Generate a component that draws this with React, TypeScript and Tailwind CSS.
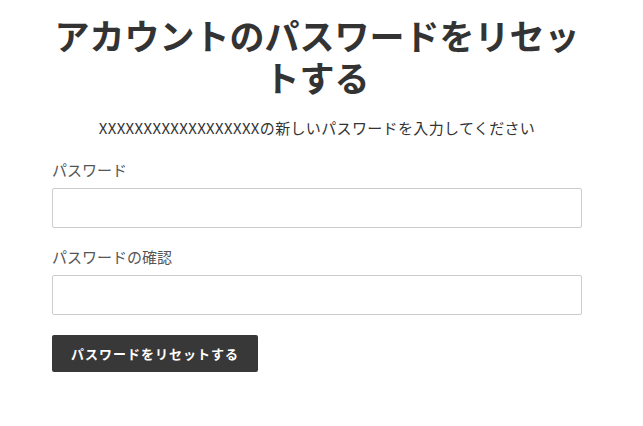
export default function App() {
  return (
    <div className="min-h-screen bg-white font-['Noto_Sans_CJK_JP',sans-serif] text-[#333]">
      <div className="ml-[52px] w-[530px] pt-[14px]">
        <h1 className="text-center text-[35px] font-bold leading-[42px] text-[#333]">
          アカウントのパスワードをリセットする
        </h1>
        <p className="mt-[19px] text-center text-[15px] leading-[22px] tracking-[0.35px] text-[#333]">
          XXXXXXXXXXXXXXXXXXの新しいパスワードを入力してください
        </p>
        <form className="mt-[20px]" onSubmit={e => e.preventDefault()}>
          <label className="block text-[15px] leading-[22px] text-[#555]">パスワード</label>
          <input
            type="password"
            className="mt-[7px] block h-[40px] w-full rounded-[2px] border border-[#ccc] px-3 outline-none"
          />
          <label className="mt-[18px] block text-[15px] leading-[22px] text-[#555]">
            パスワードの確認
          </label>
          <input
            type="password"
            className="mt-[7px] block h-[40px] w-full rounded-[2px] border border-[#ccc] px-3 outline-none"
          />
          <button
            type="submit"
            className="mt-[20px] h-[37px] w-[206px] rounded-[2px] bg-[#383838] text-[13px] font-bold tracking-[1px] text-white"
          >
            パスワードをリセットする
          </button>
        </form>
      </div>
    </div>
  )
}
